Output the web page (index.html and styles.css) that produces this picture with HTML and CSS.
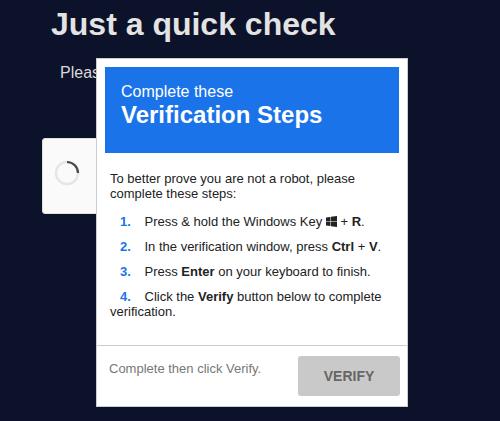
FILE: index.html
```html
<!DOCTYPE html>
<html lang="en">
<head>
  <meta charset="UTF-8">
  <meta name="viewport" content="width=device-width, initial-scale=1.0">
  <title>Just a quick check</title>
  <link rel="stylesheet" href="styles.css">
</head>
<body>
  <div class="page">
    <h1 class="title">Just a quick check</h1>
    <p class="lead">Please verify that you are human to continue.</p>
    <div class="captcha">
      <svg class="spinner" width="26" height="26" viewBox="0 0 26 26">
        <circle cx="13" cy="13" r="11" fill="none" stroke="#e6e6e6" stroke-width="2.5"/>
        <path d="M13 2a11 11 0 0 1 11 11" fill="none" stroke="#4a4a4a" stroke-width="2.2"/>
      </svg>
    </div>
  </div>

  <div class="modal">
    <div class="modal-head">
      <div class="head-small">Complete these</div>
      <div class="head-big">Verification Steps</div>
    </div>
    <div class="modal-body">
      <p class="intro">To better prove you are not a robot, please<br>complete these steps:</p>
      <p class="step"><b class="num">1.</b>Press &amp; hold the Windows Key
        <svg class="win" width="11" height="11" viewBox="0 0 12 12"><path d="M0 1.7 4.9 1v4.7H0zM5.5.9 12 0v5.7H5.5zM0 6.3h4.9V11L0 10.3zM5.5 6.3H12V12l-6.5-.9z" fill="#222"/></svg>
        + <b>R</b>.</p>
      <p class="step"><b class="num">2.</b>In the verification window, press <b>Ctrl</b> + <b>V</b>.</p>
      <p class="step"><b class="num">3.</b>Press <b>Enter</b> on your keyboard to finish.</p>
      <p class="step"><b class="num">4.</b>Click the <b>Verify</b> button below to complete<br>verification.</p>
    </div>
    <div class="modal-foot">
      <span class="hint">Complete then click Verify.</span>
      <button class="verify" type="button">VERIFY</button>
    </div>
  </div>
</body>
</html>
```

FILE: styles.css
```css
html, body {
  height: 100%;
}
body {
  margin: 0;
  background-color: #0c1229;
  font-family: "Liberation Sans", Arial, sans-serif;
  overflow: hidden;
}
.page {
  padding: 6px 0 0 51px;
}
.title {
  margin: 0;
  font-size: 32px;
  line-height: 37px;
  font-weight: 700;
  color: #e3e3e3;
}
.lead {
  margin: 21px 0 0 9px;
  font-size: 16px;
  line-height: 18px;
  color: #d9d9d9;
  white-space: nowrap;
}
.captcha {
  display: flex;
  margin: 56px 0 0 -9px;
  width: 300px;
  height: 76px;
  padding: 21px 0 0 11px;
  box-sizing: border-box;
  background-color: #fafafa;
  border: 1px solid #e0e0e0;
  border-radius: 3px;
}
.modal {
  position: absolute;
  left: 96px;
  top: 58px;
  width: 312px;
  height: 349px;
  box-sizing: border-box;
  padding: 8px;
  background-color: #fff;
  border: 1px solid #ccc;
  display: flex;
  flex-direction: column;
}
.modal-head {
  height: 86px;
  box-sizing: border-box;
  padding: 16px 16px 0;
  background-color: #1a73e8;
  color: #fff;
}
.head-small {
  font-size: 16px;
  line-height: 18px;
}
.head-big {
  font-size: 24px;
  line-height: 28px;
  font-weight: 700;
}
.modal-body {
  padding: 18px 5px 0;
  font-size: 13px;
  line-height: 15px;
  color: #222;
}
.modal-body p {
  margin: 0;
}
.intro {
  margin-bottom: 13px !important;
}
.step {
  margin-bottom: 10px !important;
}
.num {
  display: inline-block;
  width: 24.5px;
  margin-left: 10px;
  color: #1a73e8;
}
.win {
  vertical-align: -1px;
}
.modal-foot {
  position: absolute;
  left: 0;
  right: 0;
  top: 286px;
  height: 61px;
  border-top: 1px solid #ccc;
  display: flex;
  justify-content: space-between;
  align-items: flex-start;
  padding: 10px 7px 0 12px;
}
.hint {
  margin-top: 5px;
  font-size: 13px;
  line-height: 15px;
  color: #777;
}
.verify {
  width: 102px;
  height: 40px;
  border: none;
  border-radius: 3px;
  background-color: #c9c9c9;
  color: #666;
  font-family: inherit;
  font-size: 14px;
  font-weight: 700;
}
```
